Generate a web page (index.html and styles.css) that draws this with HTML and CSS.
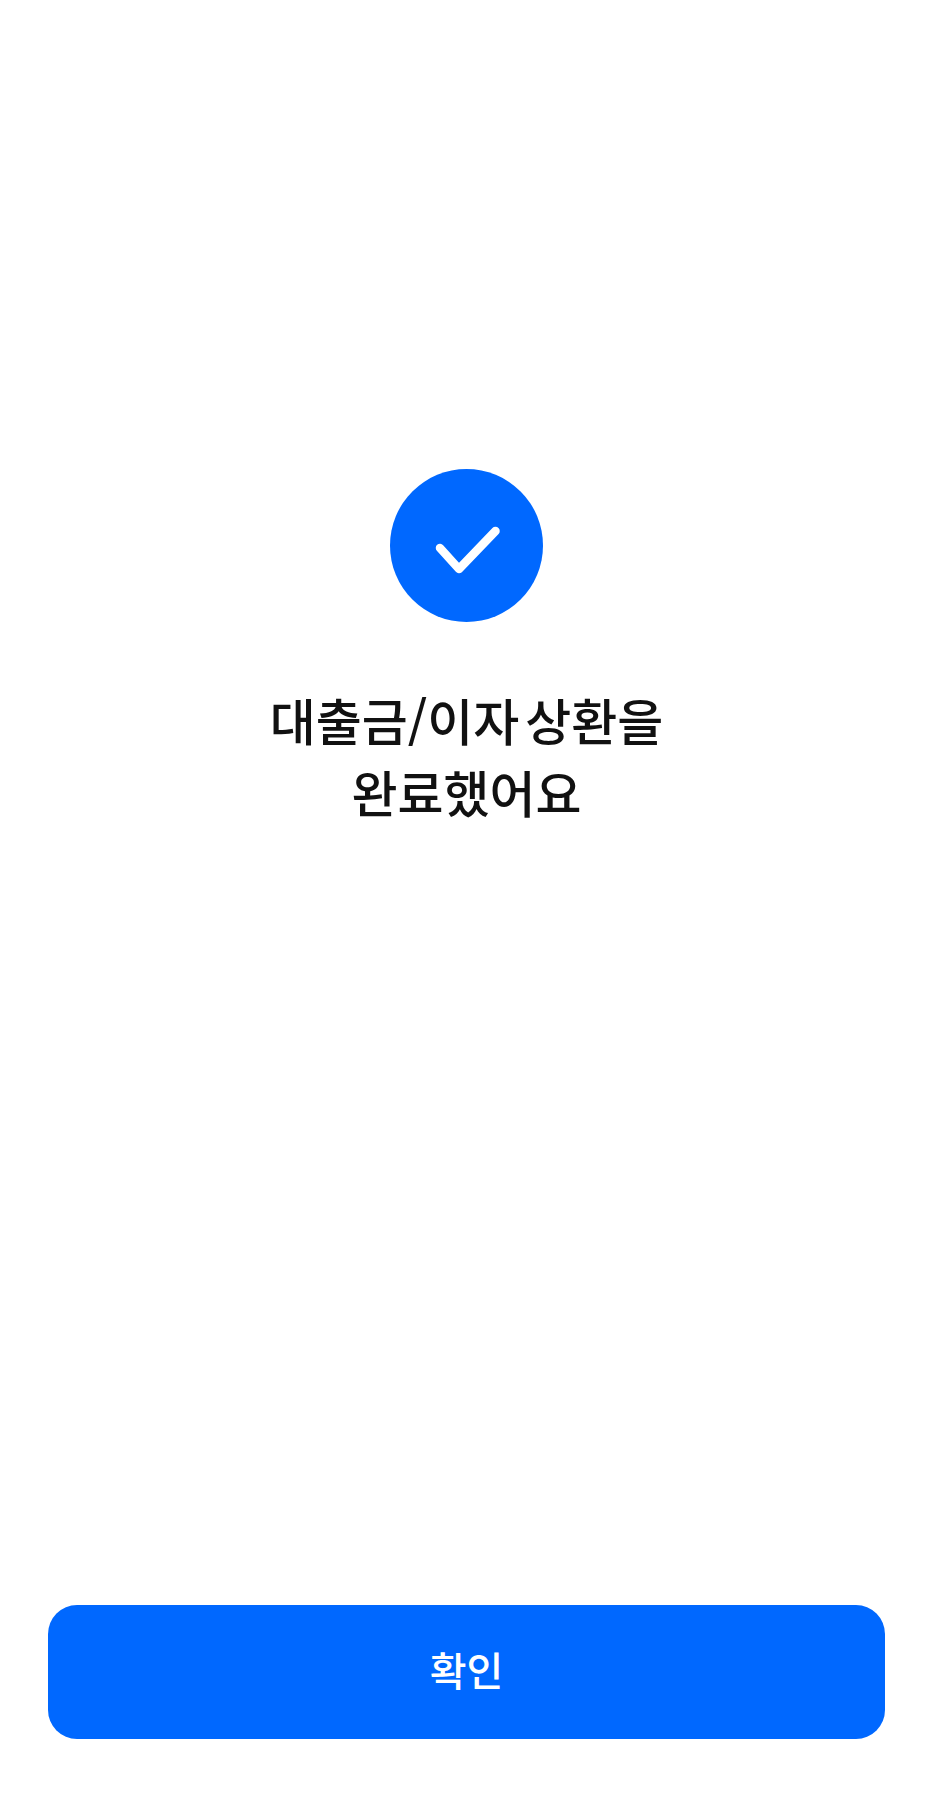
FILE: index.html
```html
<!DOCTYPE html>
<html lang="ko">

<head>
    <title>상환 완료</title>
    <link rel="stylesheet" href="styles.css">
</head>

<body>
    <div class="container">
        <div class="result">
            <div class="check-circle">
                <svg width="70" height="60" viewBox="0 0 70 60">
                    <path d="M8 32 L27 53 L63.5 15" fill="none" stroke="#fff" stroke-width="8.5" stroke-linecap="round" stroke-linejoin="round"/>
                </svg>
            </div>
            <h1 class="title">대출금/이자 상환을<br>완료했어요</h1>
        </div>
        <button type="button" class="confirm-button">확인</button>
    </div>
</body>

</html>
```

FILE: styles.css
```css
body {
    margin: 0;
    background-color: #fff;
    font-family: "Noto Sans CJK KR", "Noto Sans", sans-serif;
}

.container {
    display: flex;
    flex-direction: column;
    justify-content: space-between;
    box-sizing: border-box;
    height: 1800px;
    padding: 469px 48px 61px;
}

.result {
    display: flex;
    flex-direction: column;
    align-items: center;
}

.check-circle {
    display: flex;
    justify-content: center;
    align-items: center;
    width: 153px;
    height: 153px;
    border-radius: 50%;
    background-color: #0068ff;
}

.title {
    margin: 61px 0 0;
    font-size: 50px;
    font-weight: 500;
    line-height: 72px;
    word-spacing: -8px;
    text-align: center;
    color: #111;
}

.confirm-button {
    height: 134px;
    padding: 0 0 6px;
    border: none;
    border-radius: 29px;
    background-color: #0068ff;
    color: #fff;
    font-family: inherit;
    font-size: 40px;
    font-weight: 500;
}
```
